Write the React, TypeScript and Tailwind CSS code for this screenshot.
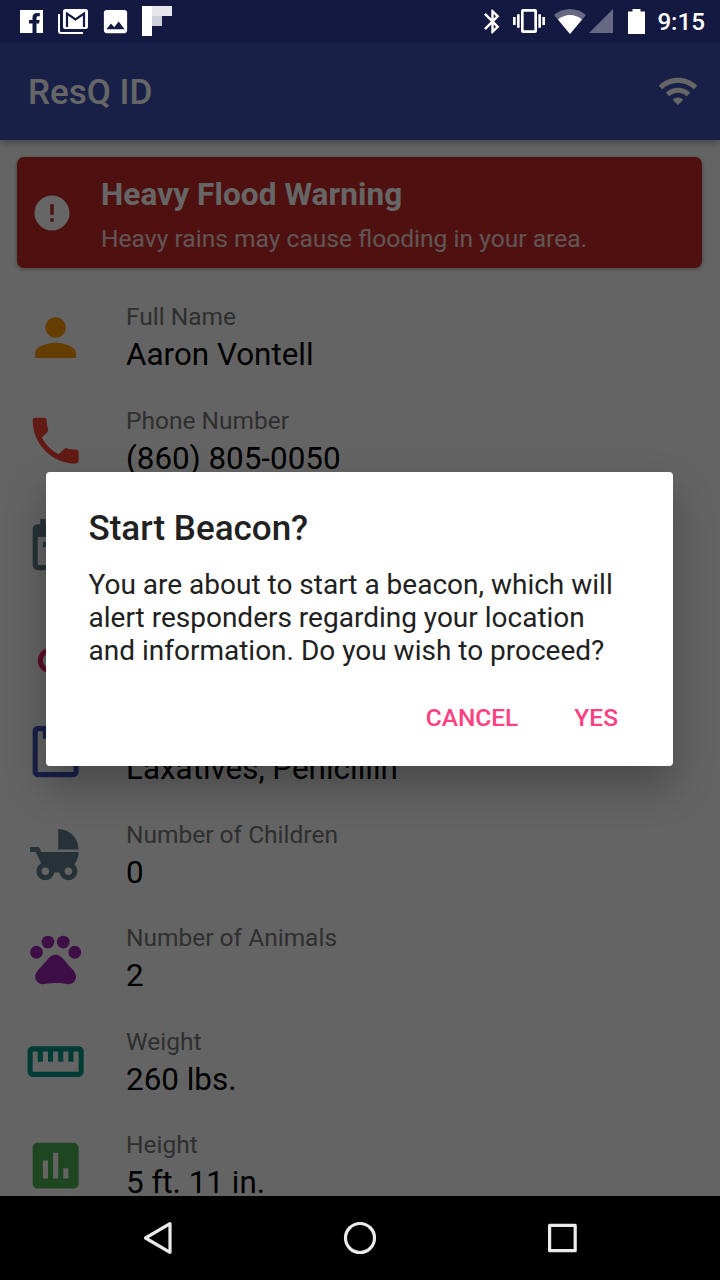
import type { ReactNode } from 'react';
import type { IconType } from 'react-icons';
import {
  MdAccessible,
  MdAssessment,
  MdBluetooth,
  MdChildFriendly,
  MdContentPaste,
  MdDateRange,
  MdError,
  MdPerson,
  MdPets,
  MdPhone,
  MdPhoto,
  MdStraighten,
  MdVibration,
  MdWifi,
} from 'react-icons/md';

type Row = { icon: IconType; color: string; label?: string; value?: string };

const rows: Row[] = [
  { icon: MdPerson, color: 'text-[#ff9800]', label: 'Full Name', value: 'Aaron Vontell' },
  { icon: MdPhone, color: 'text-[#f44336]', label: 'Phone Number', value: '(860) 805-0050' },
  { icon: MdDateRange, color: 'text-[#607d8b]' },
  { icon: MdAccessible, color: 'text-[#e91e63]' },
  { icon: MdContentPaste, color: 'text-[#3f51b5]', value: 'Laxatives, Penicillin' },
  { icon: MdChildFriendly, color: 'text-[#607d8b]', label: 'Number of Children', value: '0' },
  { icon: MdPets, color: 'text-[#9c27b0]', label: 'Number of Animals', value: '2' },
  { icon: MdStraighten, color: 'text-[#009688]', label: 'Weight', value: '260 lbs.' },
  { icon: MdAssessment, color: 'text-[#4caf50]', label: 'Height', value: '5 ft. 11 in.' },
];

function StatusBar() {
  return (
    <div className="flex h-[42px] shrink-0 items-center justify-between bg-[#131940] pl-5 pr-[15px] text-white">
      <div className="flex items-center">
        <svg className="h-[23px] w-[23px]" viewBox="0 0 23 23">
          <path fill="currentColor" d="M0 0h23v23h-6.500v-9.500h2.600l.5-3.500h-3.100V8c0-1.200.5-1.700 1.700-1.700h1.600V3h-2.600c-3 0-4.700 1.600-4.700 4.500V10H9v3.500h3.500V23H0z" />
        </svg>
        <svg className="ml-[15px] h-[25px] w-[30px]" viewBox="0 0 30 25">
          <path fill="none" stroke="currentColor" strokeWidth="2" d="M1 5v17a2 2 0 0 0 2 2h22" />
          <rect x="5" width="25" height="20" rx="2.500" fill="currentColor" />
          <path fill="none" stroke="#131940" strokeWidth="2.200" d="M9 18V4.500l8.500 6L26 4.500V18" />
        </svg>
        <MdPhoto className="ml-[11.5px] h-[31px] w-[31px]" />
        <svg className="ml-[11.5px] h-[30px] w-[30px]" viewBox="0 0 30 30">
          <path fill="#fff" d="M0 0h10v30H0z" />
          <path fill="#e6e6ec" d="M10 0h20v10H10z" />
          <path fill="#d0d0d9" d="M10 10h10v10H10z" />
        </svg>
      </div>
      <div className="flex items-center">
        <MdBluetooth className="h-[29px] w-[29px]" />
        <MdVibration className="ml-[6px] h-8 w-8" />
        <svg className="ml-[9px] h-[25px] w-[32px]" viewBox="0 0 32 25">
          <path fill="#fff" fillOpacity=".35" d="M16 25 0 6C9-2 23-2 32 6z" />
          <path fill="#fff" d="M16 25 4 10.500c7-6 17-6 24 0z" />
        </svg>
        <svg className="ml-[3px] h-6 w-6" viewBox="0 0 24 24">
          <path fill="#fff" fillOpacity=".35" d="M24 0v24H0z" />
        </svg>
        <svg className="ml-[15px] h-[25px] w-[17px]" viewBox="0 0 17 25">
          <path fill="#fff" d="M4.500 0h8v2.500H17V25H0V2.500h4.500z" />
        </svg>
        <span className="w-[60px] pt-px text-right text-[24.2px] font-medium leading-[42px]">9:15</span>
      </div>
    </div>
  );
}

function InfoRow({ icon: Icon, color, label, value }: Row) {
  return (
    <div className="flex h-[103.5px] shrink-0 items-center pl-[25px]">
      <Icon className={`h-[61.25px] w-[61.25px] shrink-0 ${color}`} />
      <div className="ml-[39.75px] flex flex-col pt-[2px]">
        <div className="h-[34px] text-[24.5px] leading-[34px] text-[#757575]">{label}</div>
        <div className="h-[42px] text-[31.4px] leading-[42px] text-black">{value}</div>
      </div>
    </div>
  );
}

function DialogButton({ children }: { children: ReactNode }) {
  return <button className="text-[24.5px] font-medium leading-7 text-[#ff4081]">{children}</button>;
}

function NavBar() {
  return (
    <nav className="flex h-[84px] shrink-0 items-center justify-center gap-[168px] bg-black">
      <svg className="h-9 w-9" viewBox="0 0 36 36" fill="none" stroke="#ebebeb" strokeWidth="3.200" strokeLinejoin="round">
        <path d="M32 3.700v28.600L7.500 18z" />
      </svg>
      <svg className="h-9 w-9" viewBox="0 0 36 36" fill="none" stroke="#ebebeb" strokeWidth="3.200">
        <circle cx="18" cy="18" r="14.500" />
      </svg>
      <svg className="h-9 w-9" viewBox="0 0 36 36" fill="none" stroke="#ebebeb" strokeWidth="3.200" strokeLinejoin="round">
        <path d="M3.600 5.400h25.600v25.300H3.600z" />
      </svg>
    </nav>
  );
}

export default function App() {
  return (
    <div className="flex h-[1280px] w-[720px] flex-col overflow-hidden font-['Roboto',sans-serif]">
      <StatusBar />
      <div className="relative flex min-h-0 flex-1 flex-col overflow-hidden bg-[#fafafa]">
        <header className="flex h-[98px] shrink-0 items-center justify-between bg-[#3f51b5] pl-7 pr-[21px] text-white shadow-[0_3px_7px_rgba(0,0,0,0.3)]">
          <h1 className="pt-[2px] text-[35px] font-medium leading-none">ResQ ID</h1>
          <MdWifi className="h-[42px] w-[42px]" />
        </header>
        <section className="ml-[17px] mr-[18px] mt-[17px] flex h-[111px] shrink-0 items-center rounded-[7px] bg-[#c62828] pl-[14px] text-white shadow-[0_1px_4px_rgba(0,0,0,0.35)]">
          <MdError className="h-[42px] w-[42px] shrink-0" />
          <div className="ml-7 pt-[9px]">
            <h2 className="text-[31.5px] font-bold leading-[44px] tracking-[0.1px]">Heavy Flood Warning</h2>
            <p className="text-[24.6px] leading-[44px] text-white/80">Heavy rains may cause flooding in your area.</p>
          </div>
        </section>
        <div className="mt-[17.5px] flex flex-col">
          {rows.map((row, i) => (
            <InfoRow key={i} {...row} />
          ))}
        </div>
        <div className="absolute inset-0 flex items-center justify-center bg-black/60 pr-px">
          <div role="dialog" className="flex h-[294px] w-[627px] flex-col rounded-[4px] bg-white px-[42.5px] pt-[36px] text-[#212121] shadow-[0_20px_40px_rgba(0,0,0,0.28)]">
            <h2 className="text-[35px] font-medium leading-[42px]">Start Beacon?</h2>
            <p className="mt-[18px] whitespace-nowrap text-[28px] leading-[33px]">
              You are about to start a beacon, which will
              <br />
              alert responders regarding your location
              <br />
              and information. Do you wish to proceed?
            </p>
            <div className="mt-[37px] flex justify-end gap-14 pr-[12.5px]">
              <DialogButton>CANCEL</DialogButton>
              <DialogButton>YES</DialogButton>
            </div>
          </div>
        </div>
      </div>
      <NavBar />
    </div>
  );
}
